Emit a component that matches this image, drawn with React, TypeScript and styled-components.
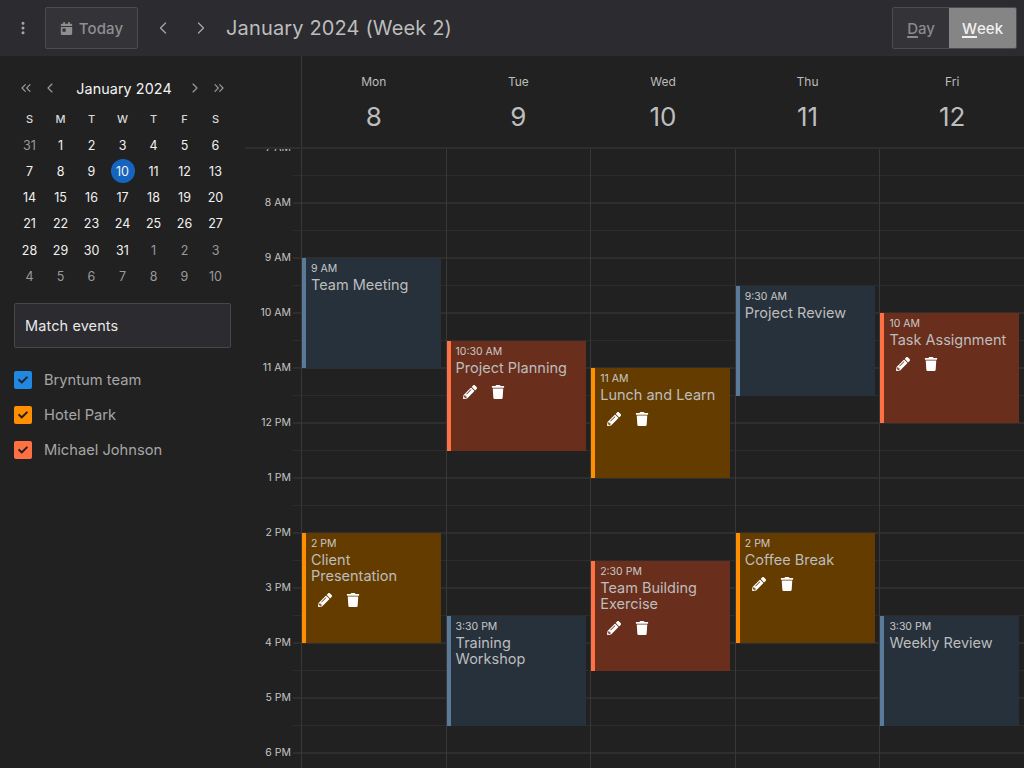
import { createGlobalStyle, styled } from "styled-components";
import { ChevronLeft, ChevronRight, ChevronsLeft, ChevronsRight, EllipsisVertical } from "lucide-react";
import { FaCalendarDay, FaCheck, FaPencilAlt, FaTrash } from "react-icons/fa";

const HOUR = 55;

const GlobalStyle = createGlobalStyle`
  html, body { margin: 0; height: 100%; background: #212121; overflow: hidden; }
  * { box-sizing: border-box; }
  body { font-family: Inter, "Liberation Sans", sans-serif; color: #fff; }
`;

const Page = styled.div`
  width: 1024px;
  height: 768px;
  display: flex;
  flex-direction: column;
  overflow: hidden;
`;

const Toolbar = styled.header`
  height: 56px;
  flex: none;
  background: #2b2b30;
  display: flex;
  align-items: center;
  padding: 0 7px 0 14px;
`;

const IconButton = styled.button<{ $width: number }>`
  width: ${(p) => p.$width}px;
  height: 42px;
  border: 0;
  padding: 0;
  background: none;
  color: #a8a8a8;
  display: flex;
  align-items: center;
  justify-content: center;
`;

const TodayButton = styled.button`
  width: 93px;
  height: 42px;
  margin: 0 6px 0 13px;
  display: flex;
  align-items: center;
  justify-content: center;
  gap: 6px;
  background: #333338;
  border: 1px solid #4c4c50;
  border-radius: 2px;
  color: #8f8f8f;
  font: 500 15px Inter, sans-serif;
  letter-spacing: 0.1px;
`;

const Title = styled.h1`
  margin: 0 0 0 6px;
  font-size: 20px;
  font-weight: 400;
  color: #bdbdbd;
  letter-spacing: 0.15px;
  flex: 1;
`;

const Segmented = styled.div`
  display: flex;
  height: 42px;
  border: 1px solid #4c4c50;
  border-radius: 2px;
  overflow: hidden;
`;

const Segment = styled.div<{ $active?: boolean; $width: number }>`
  width: ${(p) => p.$width}px;
  display: flex;
  align-items: center;
  justify-content: center;
  font-size: 15px;
  font-weight: 500;
  background: ${(p) => (p.$active ? "#858585" : "#333338")};
  color: ${(p) => (p.$active ? "#f0f0f0" : "#8a8a8a")};
  u {
    text-underline-offset: 2px;
    text-decoration-thickness: 2px;
  }
`;

const Body = styled.div`
  flex: 1;
  display: flex;
  min-height: 0;
`;

const Sidebar = styled.aside`
  width: 245px;
  flex: none;
  padding: 20px 14px 0;
  display: flex;
  flex-direction: column;
`;

const MonthNav = styled.div`
  height: 24px;
  width: 217px;
  display: flex;
  align-items: center;
  color: #9a9a9a;
`;

const NavSlot = styled.span<{ $width: number }>`
  width: ${(p) => p.$width}px;
  display: flex;
  justify-content: center;
`;

const MonthLabel = styled.span`
  flex: 1;
  padding-left: 4px;
  text-align: center;
  color: #f4f4f4;
  font-size: 14.3px;
  font-weight: 400;
  letter-spacing: 0.1px;
  white-space: nowrap;
`;

const MonthGrid = styled.div`
  margin-top: 6px;
  display: grid;
  grid-template-columns: repeat(7, 31px);
  grid-auto-rows: 26.2px;
  justify-items: center;
  align-items: center;
`;

const WeekdayCell = styled.span`
  font-size: 11px;
  font-weight: 500;
  color: #d8d8d8;
`;

const DayCell = styled.span<{ $muted?: boolean; $today?: boolean }>`
  width: 24px;
  height: 24px;
  border-radius: 50%;
  display: flex;
  align-items: center;
  justify-content: center;
  font-size: 12.5px;
  color: ${(p) => (p.$muted ? "#9a9a9a" : "#f2f2f2")};
  background: ${(p) => (p.$today ? "#1565c0" : "transparent")};
`;

const MatchField = styled.div`
  margin-top: 14px;
  height: 45px;
  width: 217px;
  background: #2b2b30;
  border: 1px solid #47474b;
  border-radius: 2px;
  display: flex;
  align-items: center;
  padding-left: 10px;
  color: #e8e8e8;
  font-size: 14.5px;
  font-weight: 400;
  letter-spacing: 0.1px;
`;

const FilterList = styled.div`
  margin-top: 14px;
  display: flex;
  flex-direction: column;
`;

const FilterRow = styled.label`
  height: 35px;
  display: flex;
  align-items: center;
  gap: 12px;
  color: #a6a6a6;
  font-size: 14.7px;
`;

const CheckBox = styled.span<{ $color: string }>`
  width: 18px;
  height: 18px;
  border-radius: 2px;
  background: ${(p) => p.$color};
  color: #212121;
  display: flex;
  align-items: center;
  justify-content: center;
`;

const Main = styled.main`
  flex: 1;
  display: flex;
  flex-direction: column;
  min-width: 0;
`;

const DayHeaderRow = styled.div`
  height: 93px;
  flex: none;
  display: flex;
  padding-left: 56px;
  border-bottom: 2px solid #2e2e2e;
`;

const DayHeader = styled.div`
  flex: 1;
  display: flex;
  flex-direction: column;
  align-items: center;
  padding-top: 18px;
  color: #bcbcbc;
  border-left: 1px solid transparent;
  &:first-child {
    border-left-color: #383838;
  }
`;

const DayName = styled.span`
  font-size: 12px;
  line-height: 16px;
`;

const DayNumber = styled.span`
  margin-top: 9px;
  font-size: 26px;
  line-height: 36px;
  color: #bdbdbd;
`;

const GridArea = styled.div`
  flex: 1;
  display: flex;
  overflow: hidden;
  min-height: 0;
`;

const TimeAxis = styled.div`
  width: 56px;
  flex: none;
  padding-right: 10px;
  background-image: linear-gradient(#2e2e2e 2px, transparent 2px),
    linear-gradient(transparent 28px, #2c2c2c 28px, #2c2c2c 29px, transparent 29px);
  background-size: 8px ${HOUR}px;
  background-position: right 0 top -2px;
  background-repeat: repeat-y;
`;

const TimeLabel = styled.div`
  height: ${HOUR}px;
  font-size: 10.5px;
  color: #c4c4c4;
  text-align: right;
  line-height: 12px;
  transform: translateY(-7px);
`;

const DayColumn = styled.div`
  flex: 1;
  position: relative;
  border-left: 1px solid #383838;
  background-image: linear-gradient(#2e2e2e 2px, transparent 2px),
    linear-gradient(transparent 28px, #2c2c2c 28px, #2c2c2c 29px, transparent 29px);
  background-size: 100% ${HOUR}px;
  background-position: 0 -2px;
`;

const KINDS = {
  blue: { bg: "#27313b", edge: "#5a7a99" },
  red: { bg: "#692f1c", edge: "#ff7043" },
  orange: { bg: "#643c00", edge: "#ff8f00" },
};

type Kind = keyof typeof KINDS;

const EventCard = styled.div<{ $start: number; $kind: Kind }>`
  position: absolute;
  top: ${(p) => (p.$start - 7) * HOUR - 1}px;
  left: 0;
  width: 139px;
  height: 110px;
  background: ${(p) => KINDS[p.$kind].bg};
  border-left: 4px solid ${(p) => KINDS[p.$kind].edge};
  padding: 5px 5px 0 5px;
`;

const EventTime = styled.div`
  font-size: 10.5px;
  line-height: 12px;
  color: #c8c8c8;
`;

const EventTitle = styled.div`
  margin-top: 2px;
  font-size: 14.5px;
  line-height: 16px;
  color: #bdbdbd;
`;

const EventActions = styled.div`
  margin: 9px 0 0 7px;
  display: flex;
  align-items: center;
  gap: 14px;
  color: #fff;
`;

const hours = ["7 AM", "8 AM", "9 AM", "10 AM", "11 AM", "12 PM", "1 PM", "2 PM", "3 PM", "4 PM", "5 PM", "6 PM"];

interface CalEvent {
  start: number;
  time: string;
  title: string;
  kind: Kind;
  actions?: boolean;
}

const days: { name: string; date: number; events: CalEvent[] }[] = [
  {
    name: "Mon",
    date: 8,
    events: [
      { start: 9, time: "9 AM", title: "Team Meeting", kind: "blue" },
      { start: 14, time: "2 PM", title: "Client Presentation", kind: "orange", actions: true },
    ],
  },
  {
    name: "Tue",
    date: 9,
    events: [
      { start: 10.5, time: "10:30 AM", title: "Project Planning", kind: "red", actions: true },
      { start: 15.5, time: "3:30 PM", title: "Training Workshop", kind: "blue" },
    ],
  },
  {
    name: "Wed",
    date: 10,
    events: [
      { start: 11, time: "11 AM", title: "Lunch and Learn", kind: "orange", actions: true },
      { start: 14.5, time: "2:30 PM", title: "Team Building Exercise", kind: "red", actions: true },
    ],
  },
  {
    name: "Thu",
    date: 11,
    events: [
      { start: 9.5, time: "9:30 AM", title: "Project Review", kind: "blue" },
      { start: 14, time: "2 PM", title: "Coffee Break", kind: "orange", actions: true },
    ],
  },
  {
    name: "Fri",
    date: 12,
    events: [
      { start: 10, time: "10 AM", title: "Task Assignment", kind: "red", actions: true },
      { start: 15.5, time: "3:30 PM", title: "Weekly Review", kind: "blue" },
    ],
  },
];

const monthDays = [
  31, 1, 2, 3, 4, 5, 6, 7, 8, 9, 10, 11, 12, 13, 14, 15, 16, 17, 18, 19, 20, 21, 22, 23, 24, 25, 26, 27, 28, 29, 30, 31,
  1, 2, 3, 4, 5, 6, 7, 8, 9, 10,
];

const filters = [
  { label: "Bryntum team", color: "#2088e0" },
  { label: "Hotel Park", color: "#ff8f00" },
  { label: "Michael Johnson", color: "#ff7043" },
];

const App = () => {
  return (
    <Page>
      <GlobalStyle />
      <Toolbar>
        <IconButton $width={18}>
          <EllipsisVertical size={16} strokeWidth={2.5} />
        </IconButton>
        <TodayButton>
          <FaCalendarDay size={13} />
          Today
        </TodayButton>
        <IconButton $width={38}>
          <ChevronLeft size={20} strokeWidth={1.5} />
        </IconButton>
        <IconButton $width={38}>
          <ChevronRight size={20} strokeWidth={1.5} />
        </IconButton>
        <Title>January 2024 (Week 2)</Title>
        <Segmented>
          <Segment $width={56}>
            <u>D</u>ay
          </Segment>
          <Segment $width={67} $active>
            <u>W</u>eek
          </Segment>
        </Segmented>
      </Toolbar>
      <Body>
        <Sidebar>
          <MonthNav>
            <NavSlot $width={24}>
              <ChevronsLeft size={16} strokeWidth={1.75} />
            </NavSlot>
            <NavSlot $width={23}>
              <ChevronLeft size={16} strokeWidth={1.75} />
            </NavSlot>
            <MonthLabel>January 2024</MonthLabel>
            <NavSlot $width={24}>
              <ChevronRight size={16} strokeWidth={1.75} />
            </NavSlot>
            <NavSlot $width={24}>
              <ChevronsRight size={16} strokeWidth={1.75} />
            </NavSlot>
          </MonthNav>
          <MonthGrid>
            {["S", "M", "T", "W", "T", "F", "S"].map((d, i) => (
              <WeekdayCell key={i}>{d}</WeekdayCell>
            ))}
            {monthDays.map((d, i) => (
              <DayCell key={i} $muted={i === 0 || i > 31} $today={i === 10}>
                {d}
              </DayCell>
            ))}
          </MonthGrid>
          <MatchField>Match events</MatchField>
          <FilterList>
            {filters.map((f) => (
              <FilterRow key={f.label}>
                <CheckBox $color={f.color}>
                  <FaCheck size={10} />
                </CheckBox>
                {f.label}
              </FilterRow>
            ))}
          </FilterList>
        </Sidebar>
        <Main>
          <DayHeaderRow>
            {days.map((d) => (
              <DayHeader key={d.name}>
                <DayName>{d.name}</DayName>
                <DayNumber>{d.date}</DayNumber>
              </DayHeader>
            ))}
          </DayHeaderRow>
          <GridArea>
            <TimeAxis>
              {hours.map((h) => (
                <TimeLabel key={h}>{h}</TimeLabel>
              ))}
            </TimeAxis>
            {days.map((d) => (
              <DayColumn key={d.name}>
                {d.events.map((e) => (
                  <EventCard key={e.title} $start={e.start} $kind={e.kind}>
                    <EventTime>{e.time}</EventTime>
                    <EventTitle>{e.title}</EventTitle>
                    {e.actions && (
                      <EventActions>
                        <FaPencilAlt size={14} />
                        <FaTrash size={14} />
                      </EventActions>
                    )}
                  </EventCard>
                ))}
              </DayColumn>
            ))}
          </GridArea>
        </Main>
      </Body>
    </Page>
  );
};

export default App;
